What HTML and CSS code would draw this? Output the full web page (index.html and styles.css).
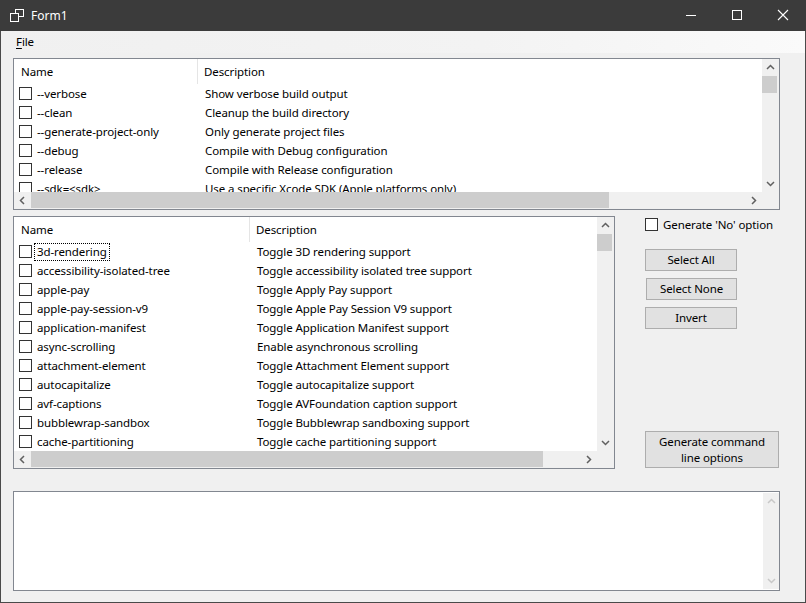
FILE: index.html
```html
<!DOCTYPE html>
<html>
<head>
<meta charset="utf-8">
<link rel="stylesheet" href="styles.css">
</head>
<body>
<div class="window">
  <div class="titlebar">
    <svg class="appicon" width="14" height="13" viewBox="0 0 14 13"><rect x="5.5" y="0.5" width="8" height="7" fill="none" stroke="#fff"/><rect x="0.5" y="4.5" width="8" height="8" fill="#3b3b3b" stroke="#fff"/></svg>
    <span class="title">Form1</span>
    <div class="controls">
      <svg class="ctl" width="46" height="31" viewBox="0 0 46 31"><rect x="18" y="15" width="10" height="1" fill="#fff"/></svg>
      <svg class="ctl" width="46" height="31" viewBox="0 0 46 31"><rect x="18.5" y="10.5" width="9" height="9" fill="none" stroke="#fff"/></svg>
      <svg class="ctl" width="46" height="31" viewBox="0 0 46 31"><path d="M18 10 L28 20 M28 10 L18 20" stroke="#fff" stroke-width="1.1"/></svg>
    </div>
  </div>
  <div class="menubar"><span class="menuitem"><u>F</u>ile</span></div>
  <div class="content">
    <div class="list list1">
      <div class="viewport">
        <div class="hdr"><div class="c1">Name</div><div class="c2">Description</div></div>
        <div class="row"><div class="c1"><span class="cb"></span>--verbose</div><div class="c2">Show verbose build output</div></div>
        <div class="row"><div class="c1"><span class="cb"></span>--clean</div><div class="c2">Cleanup the build directory</div></div>
        <div class="row"><div class="c1"><span class="cb"></span>--generate-project-only</div><div class="c2">Only generate project files</div></div>
        <div class="row"><div class="c1"><span class="cb"></span>--debug</div><div class="c2">Compile with Debug configuration</div></div>
        <div class="row"><div class="c1"><span class="cb"></span>--release</div><div class="c2">Compile with Release configuration</div></div>
        <div class="row"><div class="c1"><span class="cb"></span>--sdk=&lt;sdk&gt;</div><div class="c2">Use a specific Xcode SDK (Apple platforms only)</div></div>
      </div>
      <div class="vscroll">
        <svg class="arr" width="17" height="17" viewBox="0 0 17 17"><path d="M5 10 L8.5 6.5 L12 10" fill="none" stroke="#606060" stroke-width="1.5"/></svg>
        <div class="vthumb"></div>
        <div class="vtrack"></div>
        <svg class="arr" width="17" height="17" viewBox="0 0 17 17"><path d="M5 7 L8.5 10.5 L12 7" fill="none" stroke="#606060" stroke-width="1.5"/></svg>
      </div>
      <div class="hscroll">
        <svg class="arr" width="17" height="17" viewBox="0 0 17 17"><path d="M10 5 L6.5 8.5 L10 12" fill="none" stroke="#606060" stroke-width="1.5"/></svg>
        <div class="hthumb h1"></div>
        <div class="htrack"></div>
        <svg class="arr" width="17" height="17" viewBox="0 0 17 17"><path d="M7 5 L10.5 8.5 L7 12" fill="none" stroke="#606060" stroke-width="1.5"/></svg>
      </div>
      <div class="corner"></div>
    </div>

    <div class="middle">
      <div class="list list2">
        <div class="viewport">
          <div class="hdr"><div class="c1">Name</div><div class="c2">Description</div></div>
          <div class="row"><div class="c1"><span class="cb"></span><span class="focus">3d-rendering</span></div><div class="c2">Toggle 3D rendering support</div></div>
          <div class="row"><div class="c1"><span class="cb"></span>accessibility-isolated-tree</div><div class="c2">Toggle accessibility isolated tree support</div></div>
          <div class="row"><div class="c1"><span class="cb"></span>apple-pay</div><div class="c2">Toggle Apply Pay support</div></div>
          <div class="row"><div class="c1"><span class="cb"></span>apple-pay-session-v9</div><div class="c2">Toggle Apple Pay Session V9 support</div></div>
          <div class="row"><div class="c1"><span class="cb"></span>application-manifest</div><div class="c2">Toggle Application Manifest support</div></div>
          <div class="row"><div class="c1"><span class="cb"></span>async-scrolling</div><div class="c2">Enable asynchronous scrolling</div></div>
          <div class="row"><div class="c1"><span class="cb"></span>attachment-element</div><div class="c2">Toggle Attachment Element support</div></div>
          <div class="row"><div class="c1"><span class="cb"></span>autocapitalize</div><div class="c2">Toggle autocapitalize support</div></div>
          <div class="row"><div class="c1"><span class="cb"></span>avf-captions</div><div class="c2">Toggle AVFoundation caption support</div></div>
          <div class="row"><div class="c1"><span class="cb"></span>bubblewrap-sandbox</div><div class="c2">Toggle Bubblewrap sandboxing support</div></div>
          <div class="row"><div class="c1"><span class="cb"></span>cache-partitioning</div><div class="c2">Toggle cache partitioning support</div></div>
        </div>
        <div class="vscroll">
          <svg class="arr" width="17" height="17" viewBox="0 0 17 17"><path d="M5 10 L8.5 6.5 L12 10" fill="none" stroke="#606060" stroke-width="1.5"/></svg>
          <div class="vthumb"></div>
          <div class="vtrack"></div>
          <svg class="arr" width="17" height="17" viewBox="0 0 17 17"><path d="M5 7 L8.5 10.5 L12 7" fill="none" stroke="#606060" stroke-width="1.5"/></svg>
        </div>
        <div class="hscroll">
          <svg class="arr" width="17" height="17" viewBox="0 0 17 17"><path d="M10 5 L6.5 8.5 L10 12" fill="none" stroke="#606060" stroke-width="1.5"/></svg>
          <div class="hthumb h2"></div>
          <div class="htrack"></div>
          <svg class="arr" width="17" height="17" viewBox="0 0 17 17"><path d="M7 5 L10.5 8.5 L7 12" fill="none" stroke="#606060" stroke-width="1.5"/></svg>
        </div>
        <div class="corner"></div>
      </div>

      <div class="side">
        <label class="opt"><span class="cb"></span>Generate 'No' option</label>
        <button class="btn b1">Select All</button>
        <button class="btn b2">Select None</button>
        <button class="btn b3">Invert</button>
        <button class="btn gen">Generate command<br>line options</button>
      </div>
    </div>

    <div class="output">
      <div class="outtext"></div>
      <div class="vscroll disabled">
        <svg class="arr" width="17" height="17" viewBox="0 0 17 17"><path d="M5 10 L8.5 6.5 L12 10" fill="none" stroke="#c8c8c8" stroke-width="1.5"/></svg>
        <div class="vtrack"></div>
        <svg class="arr" width="17" height="17" viewBox="0 0 17 17"><path d="M5 7 L8.5 10.5 L12 7" fill="none" stroke="#c8c8c8" stroke-width="1.5"/></svg>
      </div>
    </div>
  </div>
</div>
</body>
</html>
```

FILE: styles.css
```css
* { box-sizing: border-box; }
html, body { margin: 0; padding: 0; }
body {
  width: 806px; height: 603px; overflow: hidden;
  font-family: "Noto Sans", "Open Sans", sans-serif;
  font-size: 11.5px; letter-spacing: -0.1px; color: #000;
}
.window {
  width: 806px; height: 603px;
  background: #f0f0f0;
  border: 1px solid #4a4a4a;
  border-top: none;
  display: flex; flex-direction: column;
}
.titlebar {
  height: 31px; background: #3b3b3b; color: #fff;
  display: flex; align-items: center;
  margin: 0 -1px;
  padding-left: 10px;
}
.appicon { display: block; }
.title { margin-left: 7px; font-size: 12px; letter-spacing: 0; }
.controls { margin-left: auto; display: flex; }
.ctl { display: block; }
.menubar {
  height: 22px;
  background: linear-gradient(to right, #f0f0f0 0%, #f3f3f3 60%, #fafafa 100%);
  display: flex; align-items: center;
  padding-left: 15px;
}
.menuitem { line-height: 22px; }
.menuitem u { text-decoration: underline; text-underline-offset: 2px; }
.content {
  padding-left: 12px;
  display: flex; flex-direction: column;
}
.list {
  border: 1px solid #828790;
  background: #fff;
  display: grid;
  grid-template-columns: 1fr 17px;
  grid-template-rows: 1fr 17px;
}
.list1 { margin-top: 5px; width: 767px; height: 152px; }
.list2 { width: 602px; height: 253px; flex: none; }
.viewport { overflow: hidden; white-space: nowrap; }
.hdr, .row { display: flex; }
.hdr { height: 25px; align-items: center; }
.row { height: 19px; align-items: center; }
.c1 { display: flex; align-items: center; flex: none; }
.list1 .c1 { width: 184px; }
.list2 .c1 { width: 236px; }
.hdr .c1 { padding-left: 7px; height: 25px; border-right: 1px solid #e5e5e5; }
.hdr .c2 { padding-left: 6px; }
.row .c1 { padding-left: 5px; }
.row .c2 { padding-left: 7px; }
.cb {
  display: inline-block; width: 13px; height: 13px;
  border: 1px solid #333; background: #fff;
  flex: none; margin-right: 5px;
}
.focus {
  outline: 1px dotted #000;
  outline-offset: 0;
  margin-left: -2px;
  padding: 0 2px;
  line-height: 16px;
}
.vscroll {
  background: #f0f0f0;
  display: flex; flex-direction: column;
}
.vthumb { height: 17px; margin: 0 2px 0 0; background: #cdcdcd; flex: none; }
.vtrack { flex: 1; }
.hscroll { background: #f0f0f0; display: flex; }
.hthumb { background: #cdcdcd; margin-bottom: 1px; flex: none; }
.h1 { width: 578px; }
.h2 { width: 512px; }
.htrack { flex: 1; }
.arr { display: block; flex: none; }
.corner { background: #f0f0f0; }
.middle {
  display: flex; margin-top: 6px;
}
.side {
  margin-left: 30px; width: 136px; height: 253px;
  display: flex; flex-direction: column; align-items: flex-start;
}
.opt { display: flex; align-items: center; height: 15px; margin-top: 1px; }
.opt .cb { margin-right: 5px; }
.btn {
  font-family: inherit; font-size: 11.5px; letter-spacing: -0.1px; color: #000;
  background: #e1e1e1; border: 1px solid #adadad;
  height: 22px; width: 92px; padding: 0; line-height: 18px;
}
.b1 { margin-top: 17px; }
.b2 { margin-top: 7px; margin-left: 1px; width: 91px; }
.b3 { margin-top: 7px; }
.gen {
  margin-top: auto; margin-bottom: 1px;
  width: 134px; height: 37px; line-height: 16px;
}
.output {
  margin-top: 22px;
  width: 767px; height: 100px;
  border: 1px solid #828790; background: #fff;
  display: flex;
}
.outtext { flex: 1; }
.output .vscroll { width: 16px; margin: 1px 0; }
```
